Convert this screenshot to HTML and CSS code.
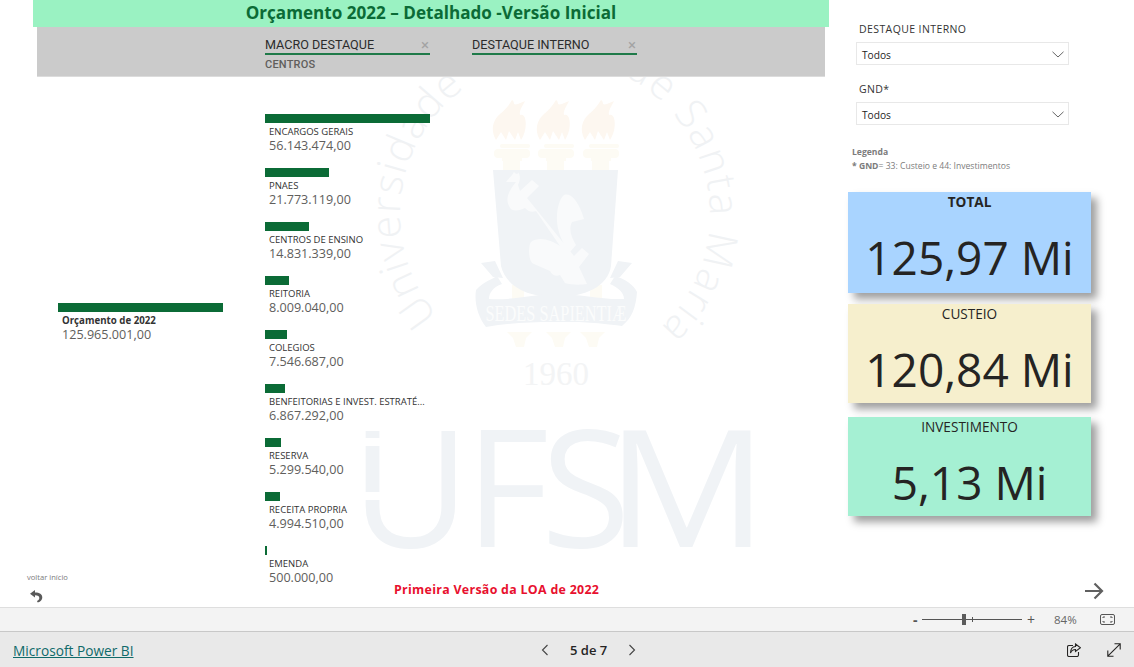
FILE: index.html
```html
<!DOCTYPE html>
<html lang="pt-BR">
<head>
<meta charset="utf-8">
<title>Orçamento 2022</title>
<link rel="stylesheet" href="styles.css">
</head>
<body>
<div class="app">
  <main class="canvas">
    <svg class="watermark" viewBox="0 0 1134 607" width="1134" height="607" aria-hidden="true">
      <defs>
        <path id="ring" d="M 438 316 A 155 155 0 1 1 659 329"/>
      </defs>
      <text class="wm-ring"><textPath href="#ring" textLength="258">Universidade</textPath></text>
      <text class="wm-ring"><textPath href="#ring" startOffset="425" textLength="300">de Santa Maria</textPath></text>
      <g class="wm-flame">
        <path d="M496 140c-6-10-3-20 4-26 6-5 9-9 12-14 3 1 0 6 6 4 2-1 5-2 7-3-3 6-6 10-5 14 3-1 4 1 5 3 2 7 0 16-4 22l-3-8-3 8-6-9-3 9-5-8z"/>
        <path d="M540 140c-6-10-3-20 4-26 6-5 9-9 12-14 3 1 0 6 6 4 2-1 5-2 7-3-3 6-6 10-5 14 3-1 4 1 5 3 2 7 0 16-4 22l-3-8-3 8-6-9-3 9-5-8z"/>
        <path d="M585 140c-6-10-3-20 4-26 6-5 9-9 12-14 3 1 0 6 6 4 2-1 5-2 7-3-3 6-6 10-5 14 3-1 4 1 5 3 2 7 0 16-4 22l-3-8-3 8-6-9-3 9-5-8z"/>
      </g>
      <g class="wm-cream">
        <rect x="500" y="144" width="30" height="4" rx="2"/><rect x="494" y="149" width="36" height="9" rx="4"/><rect x="502" y="158" width="20" height="3"/><rect x="503" y="161" width="17" height="9"/>
        <rect x="544" y="144" width="30" height="4" rx="2"/><rect x="538" y="149" width="36" height="9" rx="4"/><rect x="546" y="158" width="20" height="3"/><rect x="547" y="161" width="17" height="9"/>
        <rect x="589" y="144" width="30" height="4" rx="2"/><rect x="583" y="149" width="36" height="9" rx="4"/><rect x="591" y="158" width="20" height="3"/><rect x="592" y="161" width="17" height="9"/>
        <rect x="512" y="285" width="12" height="30"/><rect x="590" y="285" width="12" height="30"/>
        <path d="M507 332h25l-6 6-2 9h-8l-3-9zM546 332h25l-6 6-2 9h-8l-3-9zM580 332h25l-6 6-2 9h-8l-3-9z"/>
      </g>
      <path class="wm-shield" d="M493 170h125l-7 96c-3 20-25 31-55 31s-50-11-55-31z"/>
      <path class="wm-gap" d="M506 182c2-3 6-6 8-10 2 3 5 2 4 0 3 4 2 9 0 13l2 6 12-11 7 6-12 12 47 58 8-8 7 6-10 13 8 17c-6 1-16 1-22-1l-5-8c-4 2-8 0-10-4l-16-7c-6-2-6-18-3-22 8-6 20-2 29 4l-24-35c-5 2-8 0-11-3-6 3-14 4-16-2-4-8 0-15 7-24zM564 195c5-2 12 2 18 18l2 6-12 3c-4 8 0 16 4 23l-6 7c-8-8-14-24-13-36 0-8 3-18 7-21z"/>
      <g class="wm-shield">
        <path d="M481 263l14-2 8 17-10-1zM632 263l-14-2-8 17 10-1z"/>
        <path d="M476 290c8-9 17-11 21-14l5 8c-9 3-13 9-13 15 20 2 45-5 66-5 25 0 48 6 69 5 0-6-5-11-14-15l5-8c10 3 19 9 22 16-1 15-5 26-15 34-30-4-42-4-68-4-25 0-45 1-68 5-8-10-12-25-10-37z"/>
      </g>
      <text class="wm-motto" x="556" y="321" textLength="141" lengthAdjust="spacingAndGlyphs">SEDES SAPIENTIÆ</text>
      <text class="wm-year" x="556" y="385">1960</text>
      <g class="wm-brand">
        <text x="351" y="547">U</text>
        <text x="465" y="547">F</text>
        <text x="541" y="547">S</text>
        <text x="606" y="547" textLength="162" lengthAdjust="spacingAndGlyphs">M</text>
      </g>
      <rect class="wm-white" x="364" y="438" width="22" height="8"/>
      <rect class="wm-white" x="364" y="492" width="22" height="8"/>
    </svg>

    <section class="report">
      <h1 class="banner">Orçamento 2022 – Detalhado -Versão Inicial</h1>
      <div class="levels">
        <div class="level">
          <div class="level-head"><span>MACRO DESTAQUE</span><span class="level-x">×</span></div>
          <div class="level-sub">CENTROS</div>
        </div>
        <div class="level">
          <div class="level-head"><span>DESTAQUE INTERNO</span><span class="level-x">×</span></div>
        </div>
      </div>
      <div class="tree">
        <div class="tree-root">
          <div class="node">
            <div class="bar bar-root"></div>
            <div class="node-label node-label-root">Orçamento de 2022</div>
            <div class="node-value">125.965.001,00</div>
          </div>
        </div>
        <div class="tree-children">
          <div class="node"><div class="bar" style="width:165px"></div><div class="node-label">ENCARGOS GERAIS</div><div class="node-value">56.143.474,00</div></div>
          <div class="node"><div class="bar" style="width:64px"></div><div class="node-label">PNAES</div><div class="node-value">21.773.119,00</div></div>
          <div class="node"><div class="bar" style="width:44px"></div><div class="node-label">CENTROS DE ENSINO</div><div class="node-value">14.831.339,00</div></div>
          <div class="node"><div class="bar" style="width:24px"></div><div class="node-label">REITORIA</div><div class="node-value">8.009.040,00</div></div>
          <div class="node"><div class="bar" style="width:22px"></div><div class="node-label">COLEGIOS</div><div class="node-value">7.546.687,00</div></div>
          <div class="node"><div class="bar" style="width:20px"></div><div class="node-label">BENFEITORIAS E INVEST. ESTRATÉ...</div><div class="node-value">6.867.292,00</div></div>
          <div class="node"><div class="bar" style="width:16px"></div><div class="node-label">RESERVA</div><div class="node-value">5.299.540,00</div></div>
          <div class="node"><div class="bar" style="width:15px"></div><div class="node-label">RECEITA PROPRIA</div><div class="node-value">4.994.510,00</div></div>
          <div class="node"><div class="bar" style="width:2px"></div><div class="node-label">EMENDA</div><div class="node-value">500.000,00</div></div>
        </div>
      </div>
      <div class="note">Primeira Versão da LOA de 2022</div>
      <div class="back">
        <span class="back-label">voltar início</span>
        <svg class="back-icon" width="14" height="14" viewBox="0 0 14 14" aria-hidden="true"><path d="M6 1 1 4.800 6 8.500V6.200c3 0 4.300.8 4.300 2.800 0 1.300-.8 2.300-2.400 3l.9 1.500c2.900-.9 4.500-2.700 4.500-5 0-3.500-2.700-5-7.300-5z"/></svg>
      </div>
    </section>

    <aside class="side">
      <div class="slicer">
        <div class="slicer-label">DESTAQUE INTERNO</div>
        <div class="dropdown"><span>Todos</span><svg width="12" height="7" viewBox="0 0 12 7" aria-hidden="true"><path d="M.5.8 6 6l5.500-5.200"/></svg></div>
      </div>
      <div class="slicer">
        <div class="slicer-label">GND*</div>
        <div class="dropdown"><span>Todos</span><svg width="12" height="7" viewBox="0 0 12 7" aria-hidden="true"><path d="M.5.8 6 6l5.500-5.200"/></svg></div>
      </div>
      <div class="legend">
        <div class="legend-title">Legenda</div>
        <div class="legend-text"><b>* GND</b>= 33: Custeio e 44: Investimentos</div>
      </div>
      <div class="cards">
        <div class="card card-total"><div class="card-title card-title-strong">TOTAL</div><div class="card-value">125,97 Mi</div></div>
        <div class="card card-custeio"><div class="card-title">CUSTEIO</div><div class="card-value">120,84 Mi</div></div>
        <div class="card card-invest"><div class="card-title">INVESTIMENTO</div><div class="card-value">5,13 Mi</div></div>
      </div>
      <svg class="next" width="20" height="18" viewBox="0 0 20 18" aria-hidden="true"><path d="M1 9h16.500M10.500 1.500 18 9l-7.500 7.500"/></svg>
    </aside>
  </main>

  <div class="zoombar">
    <span class="zoom-sign">-</span>
    <span class="slider"><span class="slider-tick"></span><span class="slider-thumb"></span></span>
    <span class="zoom-sign zoom-plus">+</span>
    <span class="zoom-pct">84%</span>
    <svg class="fit" width="15" height="11" viewBox="0 0 15 11" aria-hidden="true"><rect x=".5" y=".5" width="14" height="10" rx="1.500"/><path d="M3 4V3h2M10 3h2v1M12 7v1h-2M5 8H3V7"/></svg>
  </div>

  <footer class="footer">
    <a class="brand" href="#">Microsoft Power BI</a>
    <nav class="pager">
      <svg width="8" height="12" viewBox="0 0 8 12" aria-hidden="true"><path d="M6.500 1 1.500 6l5 5"/></svg>
      <span class="pager-text">5 de 7</span>
      <svg width="8" height="12" viewBox="0 0 8 12" aria-hidden="true"><path d="M1.500 1l5 5-5 5"/></svg>
    </nav>
    <div class="tools">
      <svg width="14" height="14" viewBox="0 0 14 14" aria-hidden="true"><path d="M6 2.500H2A1.500 1.500 0 0 0 .5 4v8A1.500 1.500 0 0 0 2 13.500h8A1.500 1.500 0 0 0 11.500 12V9"/><path d="M8.500 1l5 3.800-5 3.700V6.500C6 6.500 4.500 7.500 3.500 10c0-4 1.800-6.500 5-6.500z"/></svg>
      <svg width="14" height="14" viewBox="0 0 14 14" aria-hidden="true"><path d="M.8 13.200 13.200.8M7.500.8h5.700v5.700M.8 7.500v5.700h5.700"/></svg>
    </div>
  </footer>
</div>
</body>
</html>
```

FILE: styles.css
```css
* { box-sizing: border-box; }
html, body { margin: 0; height: 100%; overflow: hidden; background: #fff; }
body { font-family: "Open Sans", "Liberation Sans", sans-serif; color: #252423; }

.app { display: flex; flex-direction: column; width: 1134px; height: 667px; }
.canvas { position: relative; display: flex; height: 607px; flex: none; overflow: hidden; background: #fff; }

/* background picture of the report */
.watermark { position: absolute; left: 0; top: 0; }
.watermark path, .watermark rect { stroke: none; }
.wm-ring { font-family: "Open Sans", sans-serif; font-weight: 300; font-size: 41px; fill: #f0f2f4; }
.wm-flame { fill: #fdf7f0; }
.wm-cream { fill: #fdfbf4; }
.wm-shield { fill: #f0f3f6; }
.watermark .wm-gap { fill: #f9fafb; }
.wm-motto { font-family: "Liberation Serif", serif; font-size: 23px; fill: #fbfcfc; text-anchor: middle; }
.wm-year { font-family: "Liberation Serif", serif; font-size: 33px; fill: #f3f4f5; text-anchor: middle; }
.wm-brand { font-family: "Open Sans", sans-serif; font-weight: 400; font-size: 163px; fill: #f0f3f6; }
.watermark .wm-white { fill: #fff; }

/* report column */
.report { position: relative; width: 848px; flex: none; }
.banner { margin: 0 0 0 33px; width: 796px; height: 27px; background: #9af2c2; color: #0b6b36; font-size: 17.100px; font-weight: 700; line-height: 25px; text-align: center; }
.levels { display: flex; gap: 42px; margin-left: 37px; width: 788px; height: 50px; padding: 10px 0 0 228px; background: #cbcbcb; border-bottom: 1px solid #dcdcdc; }
.level { width: 165px; }
.level-head { display: flex; justify-content: space-between; height: 18px; border-bottom: 2px solid #1f7a49; font-family: Roboto, sans-serif; font-size: 12.600px; line-height: 16px; color: #2b2b2b; }
.level-x { color: #a3a3a3; font-size: 15px; line-height: 16px; height: 16px; padding-right: 1px; }
.level-sub { margin-top: 3px; font-family: Roboto, sans-serif; font-size: 11px; font-weight: 500; line-height: 13px; color: #605e5c; letter-spacing: .2px; }

.tree { display: flex; padding-top: 37px; }
.tree-root { width: 265px; flex: none; padding: 189px 0 0 58px; }
.tree-children { display: flex; flex-direction: column; }
.node { height: 54px; flex: none; }
.bar { height: 9px; background: #0b6b36; }
.bar-root { width: 165px; }
.node-label { margin-top: 2px; padding-left: 4px; font-size: 9.500px; line-height: 13px; color: #333; white-space: nowrap; }
.node-label-root { font-size: 9.700px; font-weight: 700; }
.node-value { padding-left: 4px; font-size: 12.600px; line-height: 15px; color: #605e5c; white-space: nowrap; }

.note { position: absolute; left: 394px; top: 581px; width: 202px; text-align: center; font-size: 12.400px; letter-spacing: .3px; font-weight: 700; line-height: 17px; color: #e8102e; white-space: nowrap; }
.back { position: absolute; left: 27px; top: 572px; display: flex; flex-direction: column; gap: 7px; }
.back-label { font-size: 7.600px; line-height: 10px; color: #7b7b7b; }
.back-icon { margin-left: 2px; fill: #5a5a5a; }

/* right column */
.side { position: relative; width: 286px; flex: none; padding-top: 21px; }
.slicer { margin-left: 8px; width: 213px; margin-bottom: 16px; }
.slicer-label { padding-left: 3px; font-size: 10.500px; line-height: 17px; height: 21px; letter-spacing: .4px; color: #333; }
.dropdown { display: flex; align-items: center; justify-content: space-between; height: 23px; padding: 2px 4px 0 5px; border: 1px solid #e8e8e8; background: #fff; font-size: 10.200px; color: #252423; }
.dropdown svg { fill: none; stroke: #666; stroke-width: 1; }
.legend { margin: 20px 0 0 4px; height: 47px; color: #7c7c7c; font-size: 8.600px; line-height: 14px; }
.legend-title { font-weight: 700; }
.legend-text b { font-weight: 700; }
.cards { display: flex; flex-direction: column; }
.card { width: 243px; text-align: center; box-shadow: 6px 6px 8px rgba(0, 0, 0, .38); }
.card-total { height: 101px; background: #a9d4ff; margin-bottom: 11px; }
.card-custeio { height: 99px; background: #f6efcd; margin-bottom: 14px; }
.card-invest { height: 99px; background: #a5f0d3; }
.card-title { font-size: 13.600px; line-height: 20px; color: #252423; }
.card-title-strong { font-weight: 700; }
.card-value { margin-top: 16px; font-size: 46px; line-height: 58px; color: #252423; white-space: nowrap; }
.next { position: absolute; left: 236px; top: 582px; fill: none; stroke: #606060; stroke-width: 2.200; }

/* zoom bar */
.zoombar { display: flex; align-items: center; height: 24px; padding-left: 913px; background: #f3f3f3; border-top: 1px solid #dedede; flex: none; color: #555; }
.zoom-sign { width: 9px; font-size: 14px; font-weight: 700; line-height: 20px; }
.zoom-plus { margin-left: 5px; font-weight: 400; font-size: 14px; }
.slider { position: relative; display: block; width: 100px; height: 1px; background: #555; }
.slider-thumb { position: absolute; left: 40px; top: -5px; width: 4px; height: 11px; background: #5b5b5b; }
.slider-tick { position: absolute; left: 50px; top: -2px; width: 1px; height: 5px; background: #555; }
.zoom-pct { margin-left: 18px; width: 46px; flex: none; font-size: 11.500px; color: #666; }
.fit { fill: none; stroke: #555; stroke-width: 1; flex: none; }

/* footer */
.footer { display: grid; grid-template-columns: 528px auto 1fr; align-items: center; height: 36px; flex: 1; padding: 0 13px; background: #e9e9e9; border-top: 1px solid #c8c8c8; }
.brand { padding-top: 1px; font-size: 13.700px; color: #0f6a6a; text-decoration: underline; white-space: nowrap; }
.pager { display: flex; align-items: center; gap: 21px; }
.pager svg { fill: none; stroke: #444; stroke-width: 1.100; }
.pager-text { font-size: 13px; font-weight: 600; color: #252423; }
.tools { display: flex; justify-content: flex-end; gap: 26px; }
.tools svg { fill: none; stroke: #252423; stroke-width: 1.100; }
```
